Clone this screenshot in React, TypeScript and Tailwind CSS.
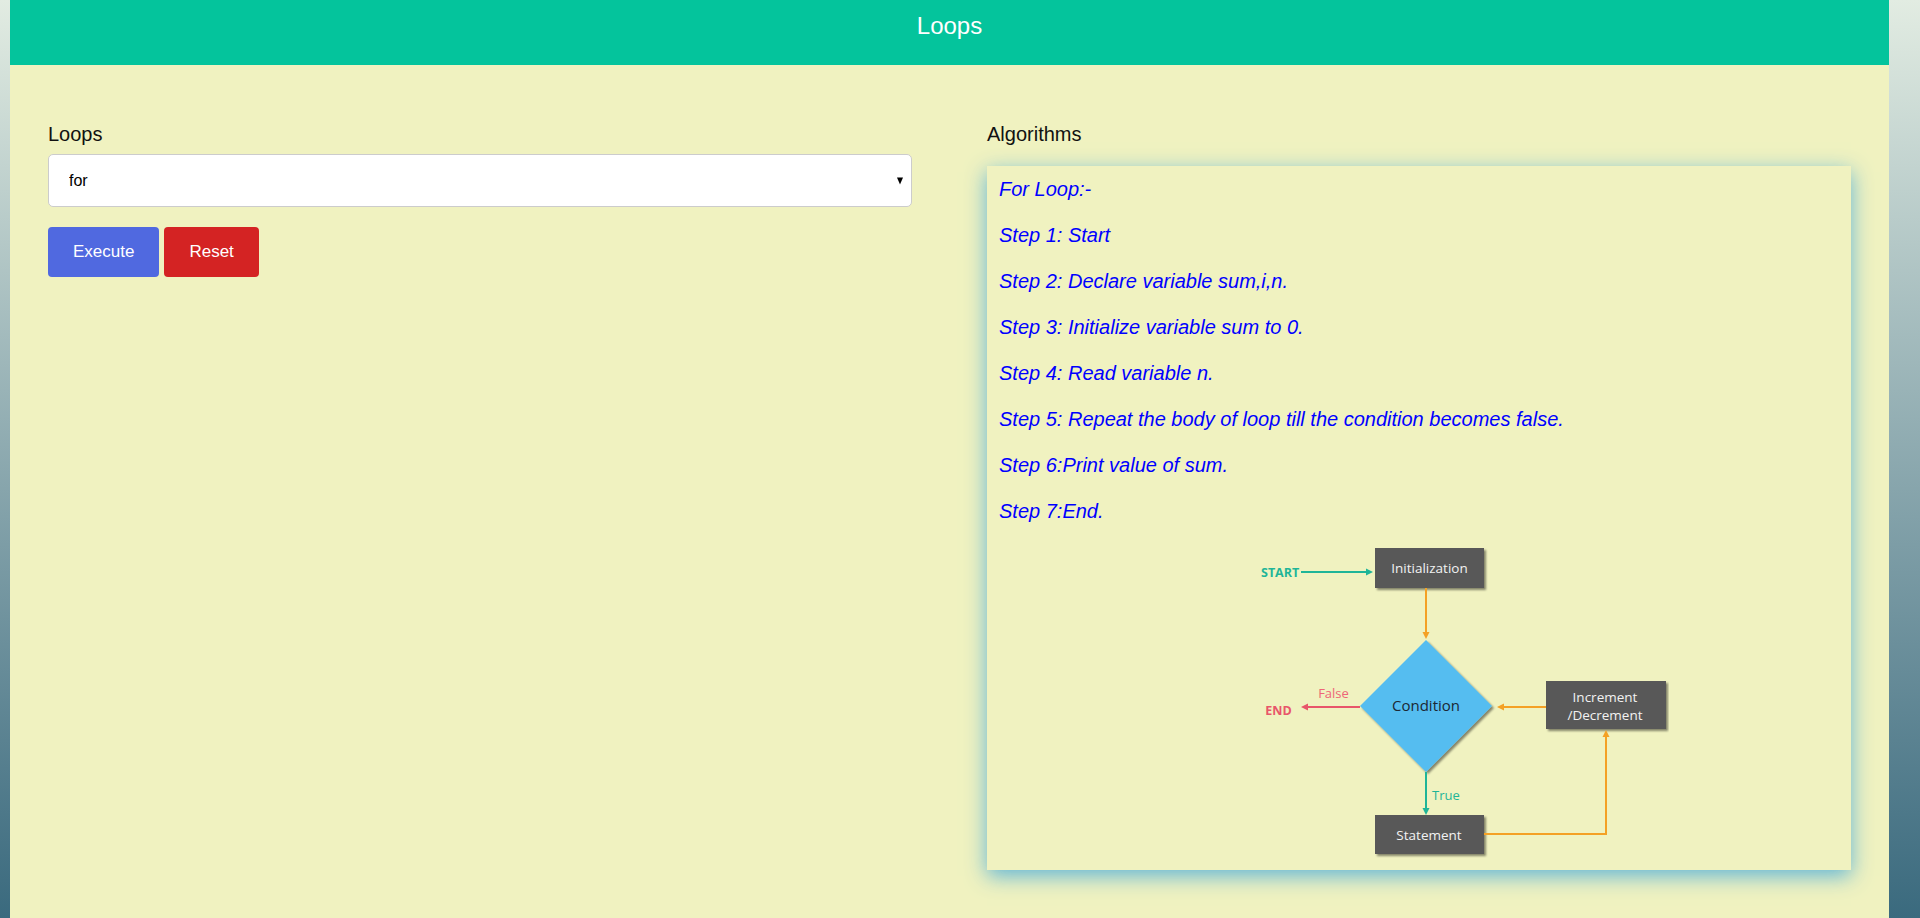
import { useState } from "react";

const steps = [
    "For Loop:-",
    "Step 1: Start",
    "Step 2: Declare variable sum,i,n.",
    "Step 3: Initialize variable sum to 0.",
    "Step 4: Read variable n.",
    "Step 5: Repeat the body of loop till the condition becomes false.",
    "Step 6:Print value of sum.",
    "Step 7:End.",
];

const TEAL = "#1fb598";
const ORANGE = "#f4a125";
const RED = "#e8566a";
const BOX = "#595959";

function FlowChart() {
    return (
        <svg width="500" height="320" viewBox="0 0 500 320" className="block mx-auto" fontFamily="'Open Sans', 'Noto Sans', sans-serif">
            <defs>
                <filter id="ds" x="-10%" y="-10%" width="130%" height="130%">
                    <feDropShadow dx="2" dy="2" stdDeviation="1.2" floodColor="#000" floodOpacity="0.45" />
                </filter>
            </defs>

            {/* start -> init */}
            <text x="92" y="32.5" fill={TEAL} fontWeight="700" fontSize="12.5">START</text>
            <line x1="132" y1="28" x2="199" y2="28" stroke={TEAL} strokeWidth="2" />
            <polygon points="204,28 197,24.5 197,31.5" fill={TEAL} />

            <rect x="206" y="4" width="109" height="40" fill={BOX} filter="url(#ds)" />
            <text x="260.5" y="29" textAnchor="middle" fill="#f2f2f2" fontSize="13.5">Initialization</text>

            <line x1="257" y1="44" x2="257" y2="89" stroke={ORANGE} strokeWidth="2" />
            <polygon points="257,95 253.5,88 260.5,88" fill={ORANGE} />

            {/* condition */}
            <polygon points="257,96 323,162 257,228 191,162" fill="#54bdf0" filter="url(#ds)" />
            <text x="257" y="167" textAnchor="middle" fontSize="15" fill="#1c2833">Condition</text>

            {/* false branch */}
            <text x="164.5" y="153.5" textAnchor="middle" fill="#ee6577" fontSize="13">False</text>
            <line x1="191" y1="163" x2="138" y2="163" stroke={RED} strokeWidth="2" />
            <polygon points="132,163 139,159.5 139,166.5" fill={RED} />
            <text x="109.5" y="170.5" textAnchor="middle" fontWeight="700" fontSize="12.5" fill={RED}>END</text>

            {/* increment */}
            <rect x="377" y="137" width="120" height="48" fill={BOX} filter="url(#ds)" />
            <text x="436" y="157.5" textAnchor="middle" fill="#f2f2f2" fontSize="13.5">Increment</text>
            <text x="436" y="175.5" textAnchor="middle" fill="#f2f2f2" fontSize="13.5">/Decrement</text>

            <line x1="377" y1="163" x2="334" y2="163" stroke={ORANGE} strokeWidth="2" />
            <polygon points="328,163 335,159.5 335,166.5" fill={ORANGE} />

            {/* true branch */}
            <line x1="257" y1="228" x2="257" y2="265" stroke={TEAL} strokeWidth="2" />
            <polygon points="257,271 253.5,264 260.5,264" fill={TEAL} />
            <text x="263" y="255.5" fill={TEAL} fontSize="13">True</text>

            <rect x="206" y="271" width="109" height="39" fill={BOX} filter="url(#ds)" />
            <text x="260" y="296" textAnchor="middle" fill="#f2f2f2" fontSize="13.5">Statement</text>

            <polyline points="315,290 437,290 437,192" fill="none" stroke={ORANGE} strokeWidth="2" />
            <polygon points="437,186 433.5,193 440.5,193" fill={ORANGE} />
        </svg>
    );
}

export default function App() {
    const [loop, setLoop] = useState("for");

    return (
        <div className="min-h-screen flex flex-col bg-fixed bg-gradient-to-b from-[#e2ece2] to-[#3a6a7e] pl-[10px] pr-[31px] font-['Liberation_Sans',Arial,sans-serif]">
            <div className="flex-1 bg-[#f0f2c0]">
                {/* header */}
                <header className="h-[65px] bg-[#04c49c] pt-[12px] text-center">
                    <h1 className="text-[24px] leading-[28px] text-white">Loops</h1>
                </header>

                <main className="grid grid-cols-2 gap-x-[75px] px-[38px] pt-[57px] pb-[40px]">
                    {/* left: selector */}
                    <section>
                        <label className="block text-[20px] leading-[24px] text-[#111] mb-[8px]">Loops</label>
                        <div className="relative">
                            <select
                                value={loop}
                                onChange={(e) => setLoop(e.target.value)}
                                className="block w-full h-[53px] appearance-none bg-white border border-[#cccccc] rounded-[5px] pl-[20px] text-[16px] text-black outline-none"
                            >
                                <option value="for">for</option>
                                <option value="while">while</option>
                                <option value="do-while">do-while</option>
                            </select>
                            <span className="pointer-events-none absolute right-[9px] top-[27px] -translate-y-1/2 w-0 h-0 border-l-[3.5px] border-r-[3.5px] border-t-[7px] border-l-transparent border-r-transparent border-t-black"></span>
                        </div>
                        <div className="flex gap-[5px] mt-[20px]">
                            <button className="h-[50px] px-[25px] rounded-[4px] bg-[#5069e0] text-white text-[17px]">Execute</button>
                            <button className="h-[50px] px-[25px] rounded-[4px] bg-[#d42323] text-white text-[17px]">Reset</button>
                        </div>
                    </section>

                    {/* right: algorithm */}
                    <section>
                        <h2 className="text-[20px] leading-[24px] text-[#111]">Algorithms</h2>
                        <div className="mt-[20px] bg-[#f0f2c0] shadow-[0_6px_20px_rgba(70,170,220,0.85)] pt-[10px] px-[12px] pb-[6px]">
                            {steps.map((s) => (
                                <p key={s} className="italic text-[20px] leading-[26px] text-[#0000ff] mb-[20px]">
                                    {s}
                                </p>
                            ))}
                            <FlowChart />
                        </div>
                    </section>
                </main>
            </div>
        </div>
    );
}
